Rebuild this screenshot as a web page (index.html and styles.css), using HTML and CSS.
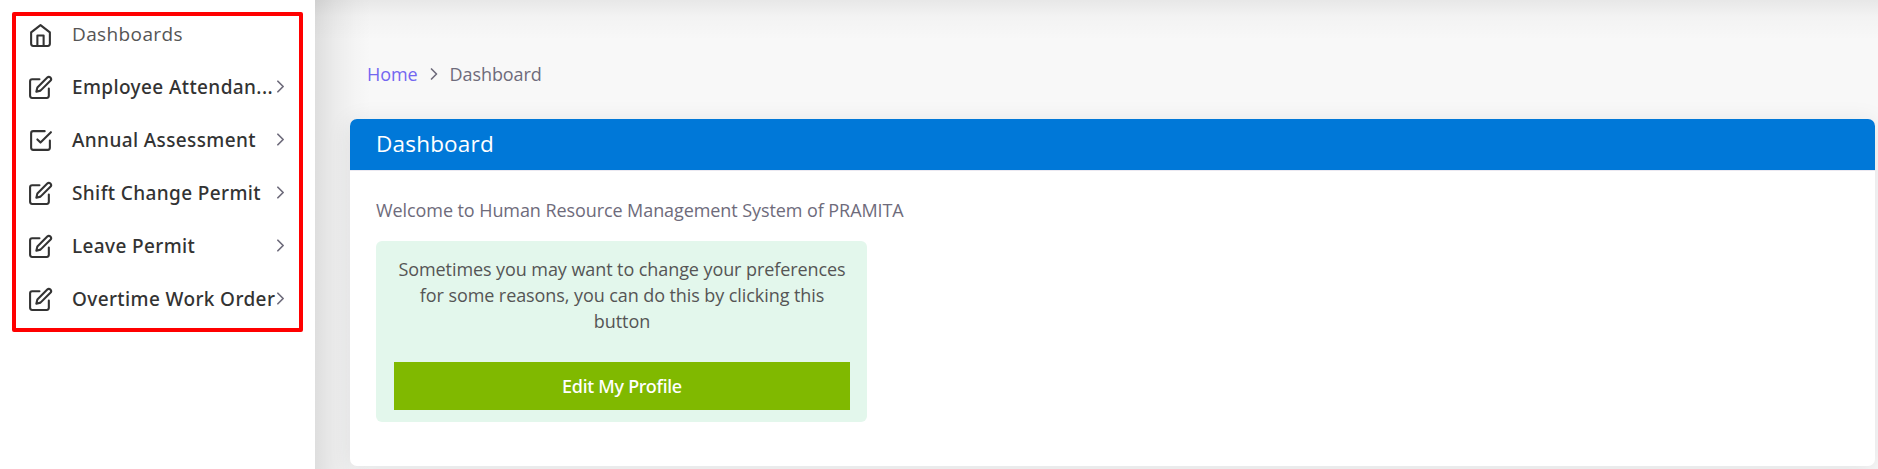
FILE: index.html
```
<!DOCTYPE html>
<html lang="en">
<head>
<meta charset="utf-8">
<title>Dashboard</title>
<link rel="stylesheet" href="styles.css">
</head>
<body>
<svg class="sprite" aria-hidden="true">
  <symbol id="home" viewBox="0 0 24 24"><path d="M3 9l9-7 9 7v11a2 2 0 0 1-2 2H5a2 2 0 0 1-2-2z"/><path d="M9 22V12h6v10"/></symbol>
  <symbol id="edit" viewBox="0 0 24 24"><path d="M11 4H4a2 2 0 0 0-2 2v14a2 2 0 0 0 2 2h14a2 2 0 0 0 2-2v-7"/><path d="M18.5 2.5a2.121 2.121 0 0 1 3 3L12 15l-4 1 1-4 9.500-9.500z"/></symbol>
  <symbol id="check" viewBox="0 0 24 24"><path d="M9 11l3 3L22 4"/><path d="M21 12v7a2 2 0 0 1-2 2H5a2 2 0 0 1-2-2V5a2 2 0 0 1 2-2h11"/></symbol>
  <symbol id="chevron" viewBox="0 0 24 24"><path d="M9 18l6-6-6-6"/></symbol>
</svg>
<div class="app">
  <aside class="sidebar">
    <nav class="menu">
      <a class="item plain"><svg class="icon"><use href="#home"/></svg><span class="label">Dashboards</span></a>
      <a class="item"><svg class="icon"><use href="#edit"/></svg><span class="label">Employee Attendan...</span><svg class="arrow"><use href="#chevron"/></svg></a>
      <a class="item"><svg class="icon"><use href="#check"/></svg><span class="label">Annual Assessment</span><svg class="arrow"><use href="#chevron"/></svg></a>
      <a class="item"><svg class="icon"><use href="#edit"/></svg><span class="label">Shift Change Permit</span><svg class="arrow"><use href="#chevron"/></svg></a>
      <a class="item"><svg class="icon"><use href="#edit"/></svg><span class="label">Leave Permit</span><svg class="arrow"><use href="#chevron"/></svg></a>
      <a class="item"><svg class="icon"><use href="#edit"/></svg><span class="label">Overtime Work Order</span><svg class="arrow"><use href="#chevron"/></svg></a>
    </nav>
  </aside>
  <main class="content">
    <div class="breadcrumb"><a class="home-link">Home</a><svg class="crumb-arrow"><use href="#chevron"/></svg><span>Dashboard</span></div>
    <section class="card">
      <h1 class="card-title">Dashboard</h1>
      <div class="card-body">
        <p class="welcome">Welcome to Human Resource Management System of PRAMITA</p>
        <div class="notice">
          <p class="notice-text">Sometimes you may want to change your preferences<br>for some reasons, you can do this by clicking this<br>button</p>
          <button class="profile-button">Edit My Profile</button>
        </div>
      </div>
    </section>
  </main>
</div>
</body>
</html>
```
FILE: styles.css
```
* { box-sizing: border-box; }
body { margin: 0; font: 18px/26px "Open Sans", "Noto Sans", sans-serif; letter-spacing: -.08px; color: #6e6b7b; }
.sprite { position: absolute; width: 0; height: 0; }
svg { fill: none; stroke: currentColor; stroke-width: 2; stroke-linecap: round; stroke-linejoin: round; flex: none; }
.app { display: flex; height: 469px; overflow: hidden; background: #f8f8f8; }
.sidebar { width: 315px; flex: none; padding: 12px; background: #fff; }
.menu { width: 291px; height: 320px; border: 4px solid #f00; border-radius: 2px; padding-left: 12px; display: flex; flex-direction: column; }
.item { display: flex; align-items: center; height: 53px; color: #333; font-family: "Noto Sans", sans-serif; font-size: 19px; font-weight: 500; letter-spacing: .38px; white-space: nowrap; }
.item.plain { height: 44px; padding-bottom: 7px; font-family: "Open Sans", sans-serif; font-weight: 400; }
.item.plain .label { color: #555; padding-bottom: 2px; }
.icon { width: 25px; height: 25px; margin-right: 19px; position: relative; top: 1px; }
.label { width: 198px; }
.arrow { width: 21px; height: 21px; color: #6e6b7b; }
.content { flex: 1; min-width: 0; padding: 61px 3px 0 35px; background: linear-gradient(90deg, rgba(0,0,0,.105), rgba(0,0,0,.05) 20px, rgba(0,0,0,.015) 40px, transparent 56px), linear-gradient(180deg, rgba(0,0,0,.065), rgba(0,0,0,.025) 16px, transparent 40px), #f8f8f8; }
.breadcrumb { display: flex; align-items: center; height: 26px; padding-left: 17px; }
.home-link { color: #7367f0; }
.crumb-arrow { width: 20px; height: 20px; margin: 0 6px; }
.card { height: 347px; margin-top: 32px; background: #fff; border-radius: 7px; overflow: hidden; box-shadow: 0 4px 24px rgba(34,41,47,.1); }
.card-title { margin: 0; height: 51px; padding: 0 26px; background: #0078d8; color: #fff; font-size: 22.5px; line-height: 49px; font-weight: 400; letter-spacing: .2px; }
.card-body { border-top: 1px solid #ebe9f1; padding: 26px; }
.welcome { margin: 0 0 18px; }
.notice { width: 491px; height: 181px; padding: 15px 17px 12px 18px; border-radius: 6px; background: #e3f7ec; text-align: center; }
.notice-text { margin: 0; height: 106px; color: #555; white-space: nowrap; }
.profile-button { display: block; width: 456px; height: 48px; border: 0; padding: 0 0 1px; background: #80b900; color: #fff; font: 500 18px "Noto Sans", sans-serif; letter-spacing: -.28px; }
```
